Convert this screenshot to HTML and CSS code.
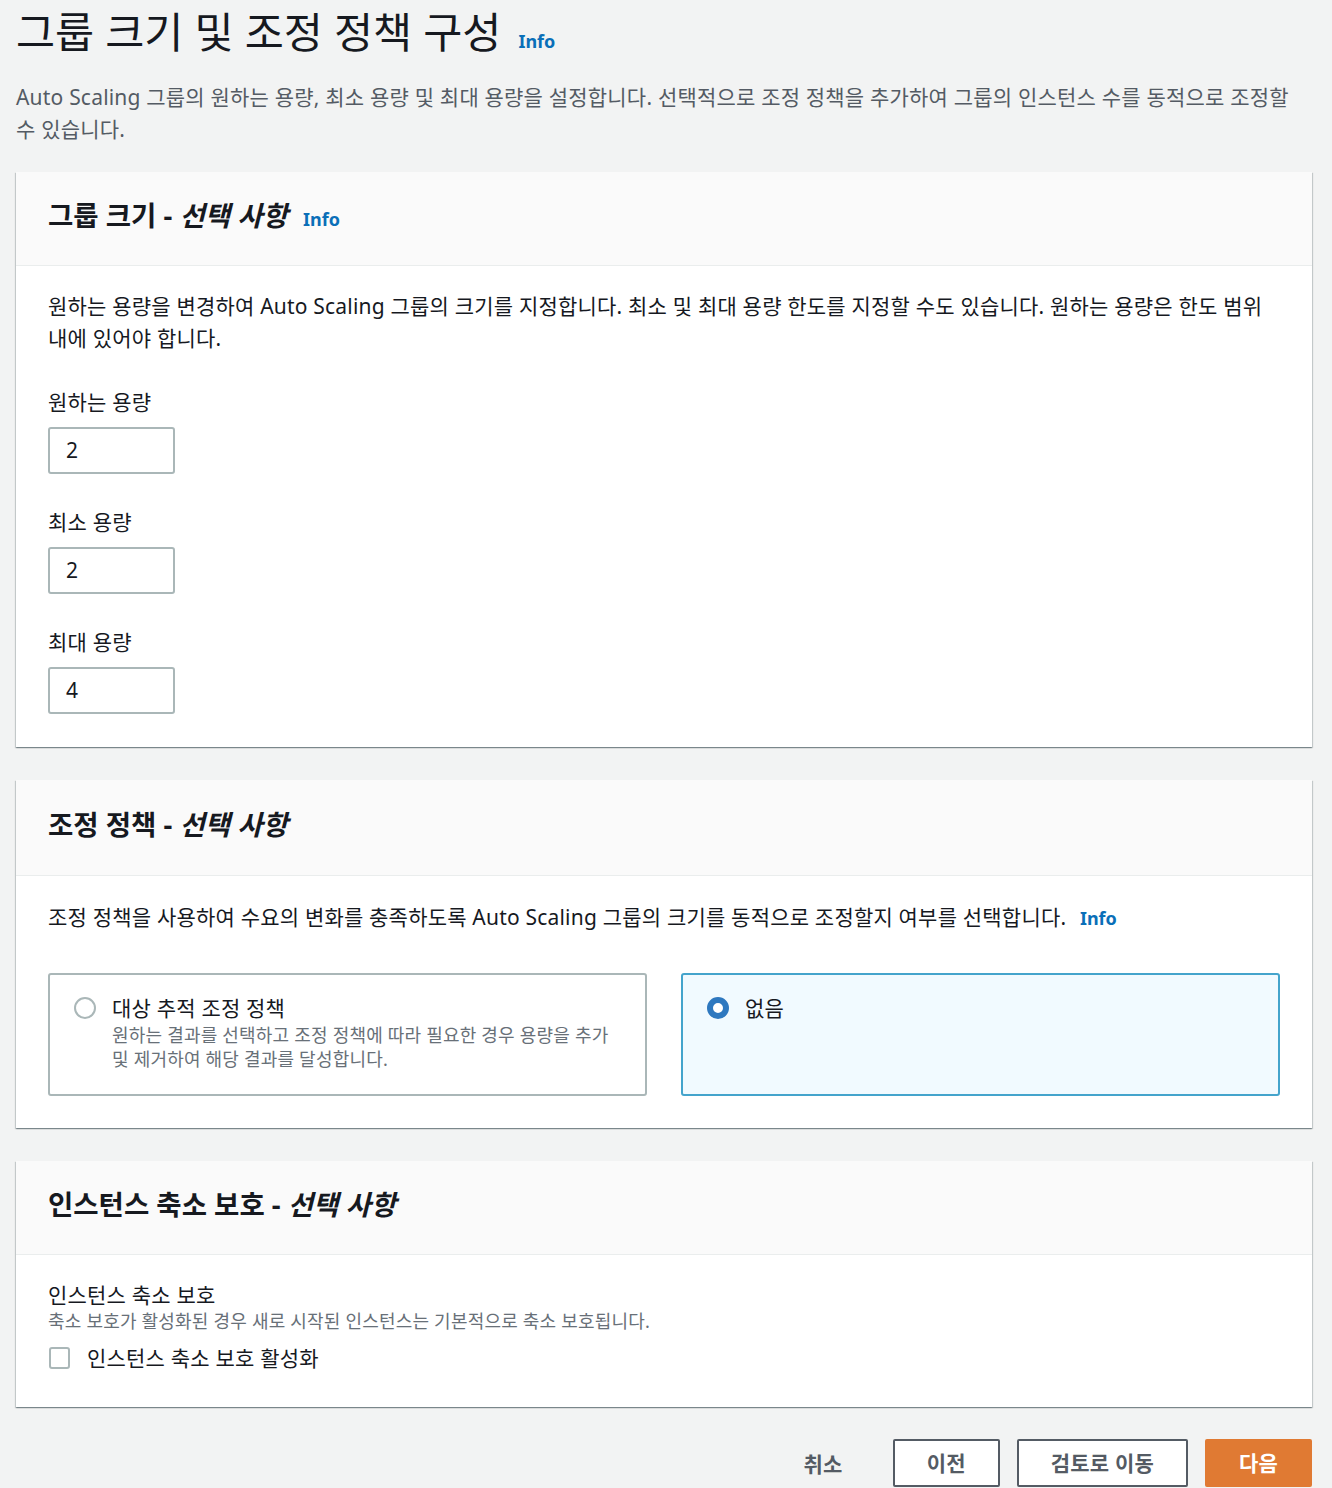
FILE: index.html
```html
<!DOCTYPE html>
<html lang="ko">

<head>
    <meta charset="UTF-8">
    <title>그룹 크기 및 조정 정책 구성</title>
    <link rel="stylesheet" href="styles.css">
</head>

<body>
    <div class="page">
        <h1 class="title">그룹 크기 및 조정 정책 구성 <a class="info info-big">Info</a></h1>
        <p class="lead">Auto Scaling 그룹의 원하는 용량, 최소 용량 및 최대 용량을 설정합니다. 선택적으로 조정 정책을 추가하여 그룹의 인스턴스 수를 동적으로 조정할 수 있습니다.</p>

        <!-- 그룹 크기 -->
        <div class="card">
            <div class="card-head">
                <h2>그룹 크기 - <i>선택 사항</i> <a class="info">Info</a></h2>
            </div>
            <div class="card-body">
                <p class="text">원하는 용량을 변경하여 Auto Scaling 그룹의 크기를 지정합니다. 최소 및 최대 용량 한도를 지정할 수도 있습니다. 원하는 용량은 한도 범위 내에 있어야 합니다.</p>
                <div class="field">
                    <label>원하는 용량</label>
                    <div class="input">2</div>
                </div>
                <div class="field">
                    <label>최소 용량</label>
                    <div class="input">2</div>
                </div>
                <div class="field">
                    <label>최대 용량</label>
                    <div class="input">4</div>
                </div>
            </div>
        </div>

        <!-- 조정 정책 -->
        <div class="card">
            <div class="card-head head-tall">
                <h2>조정 정책 - <i>선택 사항</i></h2>
            </div>
            <div class="card-body body-policy">
                <p class="text">조정 정책을 사용하여 수요의 변화를 충족하도록 Auto Scaling 그룹의 크기를 동적으로 조정할지 여부를 선택합니다. <a class="info">Info</a></p>
                <div class="tiles">
                    <div class="tile">
                        <span class="radio"></span>
                        <div>
                            <div class="tile-label">대상 추적 조정 정책</div>
                            <div class="tile-desc">원하는 결과를 선택하고 조정 정책에 따라 필요한 경우 용량을 추가 및 제거하여 해당 결과를 달성합니다.</div>
                        </div>
                    </div>
                    <div class="tile selected">
                        <span class="radio on"></span>
                        <div>
                            <div class="tile-label">없음</div>
                        </div>
                    </div>
                </div>
            </div>
        </div>

        <!-- 인스턴스 축소 보호 -->
        <div class="card">
            <div class="card-head">
                <h2>인스턴스 축소 보호 - <i>선택 사항</i></h2>
            </div>
            <div class="card-body body-small">
                <div class="prot-label">인스턴스 축소 보호</div>
                <div class="prot-desc">축소 보호가 활성화된 경우 새로 시작된 인스턴스는 기본적으로 축소 보호됩니다.</div>
                <div class="check-row">
                    <span class="checkbox"></span>
                    <span>인스턴스 축소 보호 활성화</span>
                </div>
            </div>
        </div>

        <div class="actions">
            <span class="link-btn">취소</span>
            <span class="btn">이전</span>
            <span class="btn">검토로 이동</span>
            <span class="btn primary">다음</span>
        </div>
    </div>
</body>

</html>
```

FILE: styles.css
```css
* {
    margin: 0;
    padding: 0;
    box-sizing: border-box;
}

body {
    background: #f2f3f3;
    color: #16191f;
    font-family: "Noto Sans", "Noto Sans CJK KR", sans-serif;
    font-size: 21px;
    letter-spacing: 0.2px;
}

.page {
    padding: 8px 20px 0 16px;
}

.title {
    font-size: 42.5px;
    line-height: 48px;
    font-weight: 400;
    letter-spacing: 0;
}

.info {
    color: #0a6fb8;
    font-weight: 700;
    font-size: 18px;
    line-height: 1;
    font-style: normal;
    letter-spacing: 0;
    margin-left: 8px;
}

.info-big {
    margin-left: 6px;
}

.lead {
    margin-top: 25px;
    line-height: 32px;
    color: #545b64;
}

.card {
    margin-top: 27px;
    background: #fff;
    box-shadow: 0 1px 1px 0 rgba(0, 28, 36, .3), 1px 1px 1px 0 rgba(0, 28, 36, .15), -1px 1px 1px 0 rgba(0, 28, 36, .15);
}

.card+.card {
    margin-top: 33px;
}

.card-head {
    background: #fafafa;
    border-bottom: 1px solid #eaeded;
    padding: 26px 32px 31px;
}

.head-tall {
    padding-top: 27px;
    padding-bottom: 32px;
}

.card-head h2 {
    font-size: 27.5px;
    line-height: 36px;
    font-weight: 700;
    letter-spacing: 0;
}

.card-body {
    padding: 24px 32px 33px;
}

.text {
    line-height: 32px;
}

.field {
    margin-top: 34px;
}

.field label {
    display: block;
    line-height: 28px;
}

.input {
    margin-top: 11px;
    width: 127px;
    height: 47px;
    border: 2px solid #aab7b8;
    border-radius: 3px;
    padding-left: 16px;
    line-height: 43px;
}

.body-policy {
    padding-top: 25px;
    padding-bottom: 32px;
}

.tiles {
    margin-top: 40px;
    display: grid;
    grid-template-columns: 1fr 1fr;
    gap: 34px;
}

.tile {
    height: 123px;
    border: 2px solid #aab7b8;
    border-radius: 3px;
    padding: 18px 24px;
    display: flex;
    gap: 16px;
}

.tile.selected {
    background: #f1faff;
    border-color: #44a4cc;
}

.radio {
    flex: none;
    width: 22px;
    height: 22px;
    margin-top: 4px;
    border: 2px solid #aab7b8;
    border-radius: 50%;
    background: #fff;
}

.radio.on {
    border: 6px solid #2e78bf;
}

.tile-label {
    line-height: 30px;
}

.tile-desc {
    font-size: 18px;
    line-height: 24px;
    color: #687078;
}

.body-small {
    padding-top: 26px;
    padding-bottom: 35px;
}

.prot-label {
    line-height: 28px;
}

.prot-desc {
    font-size: 18px;
    line-height: 24px;
    color: #687078;
}

.check-row {
    margin-top: 11px;
    display: flex;
    align-items: center;
    gap: 17px;
    line-height: 28px;
}

.checkbox {
    width: 21px;
    height: 22px;
    margin-left: 1px;
    border: 2px solid #aab7b8;
    border-radius: 3px;
}

.actions {
    margin-top: 32px;
    display: flex;
    justify-content: flex-end;
    align-items: center;
    gap: 17px;
}

.link-btn {
    font-weight: 700;
    color: #545b64;
    margin-right: 33px;
}

.btn {
    height: 48px;
    padding: 0 32px;
    border: 2px solid #545b64;
    border-radius: 2px;
    background: #fff;
    color: #545b64;
    font-weight: 700;
    line-height: 44px;
}

.btn.primary {
    background: #e07a33;
    border-color: #e07a33;
    color: #fff;
}
```
